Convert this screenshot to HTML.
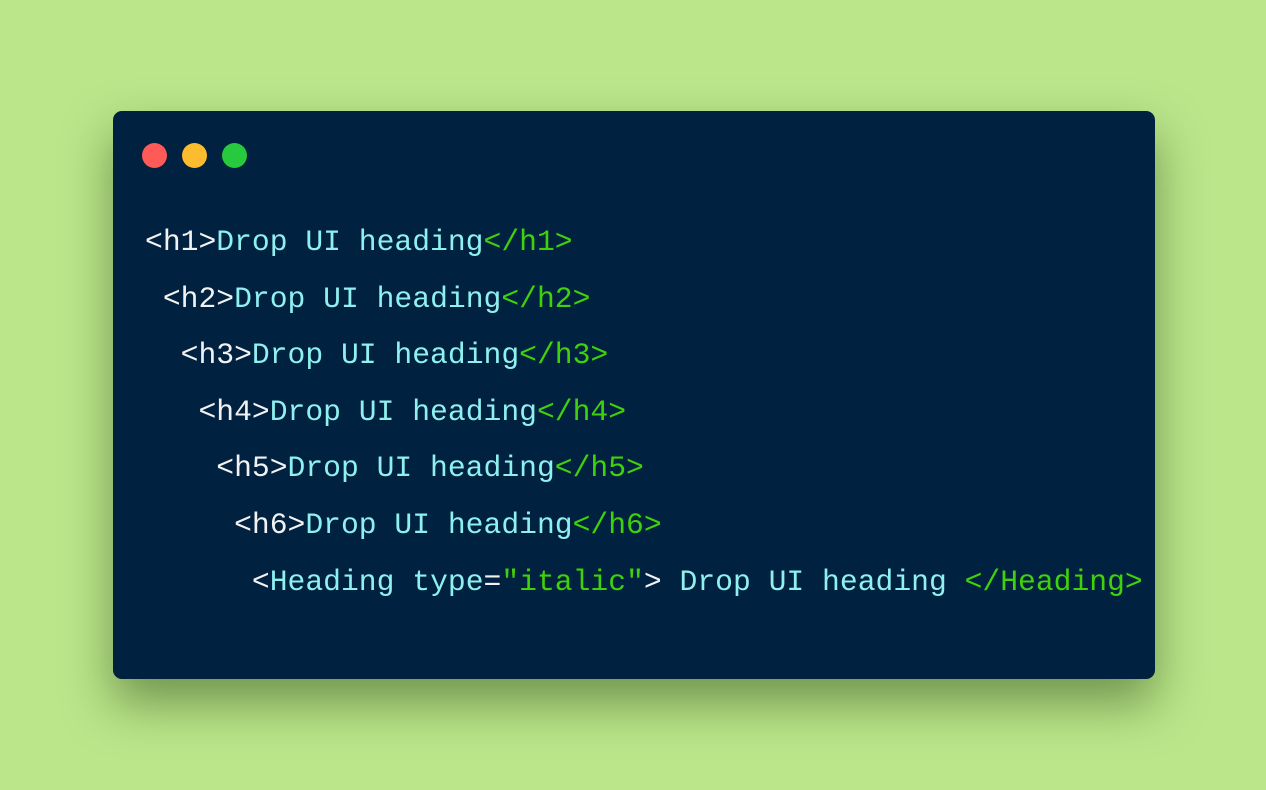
<!DOCTYPE html>
<html><head><meta charset="utf-8"><style>
html,body{margin:0;padding:0;width:1266px;height:790px;background:#bbe68a;overflow:hidden}
.card{position:absolute;left:113px;top:111px;width:1042px;height:568px;background:#002140;border-radius:9px;box-shadow:0 24px 48px rgba(40,70,20,.5)}
.dot{position:absolute;top:32px;width:25px;height:25px;border-radius:50%}
pre{position:absolute;left:32px;top:103px;margin:0;font-family:"Liberation Mono",monospace;font-size:29.7px;line-height:56.6px;color:#8ef0ef}
.w{color:#f2f2f2}.g{color:#3fd10a}
</style></head><body>
<div class="card">
<div class="dot" style="left:29px;background:#fe5a57"></div>
<div class="dot" style="left:69px;background:#fdbb2e"></div>
<div class="dot" style="left:109px;background:#27c93f"></div>
<pre><span class="w">&lt;h1&gt;</span>Drop UI heading<span class="g">&lt;/h1&gt;</span>
 <span class="w">&lt;h2&gt;</span>Drop UI heading<span class="g">&lt;/h2&gt;</span>
  <span class="w">&lt;h3&gt;</span>Drop UI heading<span class="g">&lt;/h3&gt;</span>
   <span class="w">&lt;h4&gt;</span>Drop UI heading<span class="g">&lt;/h4&gt;</span>
    <span class="w">&lt;h5&gt;</span>Drop UI heading<span class="g">&lt;/h5&gt;</span>
     <span class="w">&lt;h6&gt;</span>Drop UI heading<span class="g">&lt;/h6&gt;</span>
      <span class="w">&lt;</span>Heading type<span class="w">=</span><span class="g">"italic"</span><span class="w">&gt;</span> Drop UI heading <span class="g">&lt;/Heading&gt;</span></pre>
</div>
</body></html>
